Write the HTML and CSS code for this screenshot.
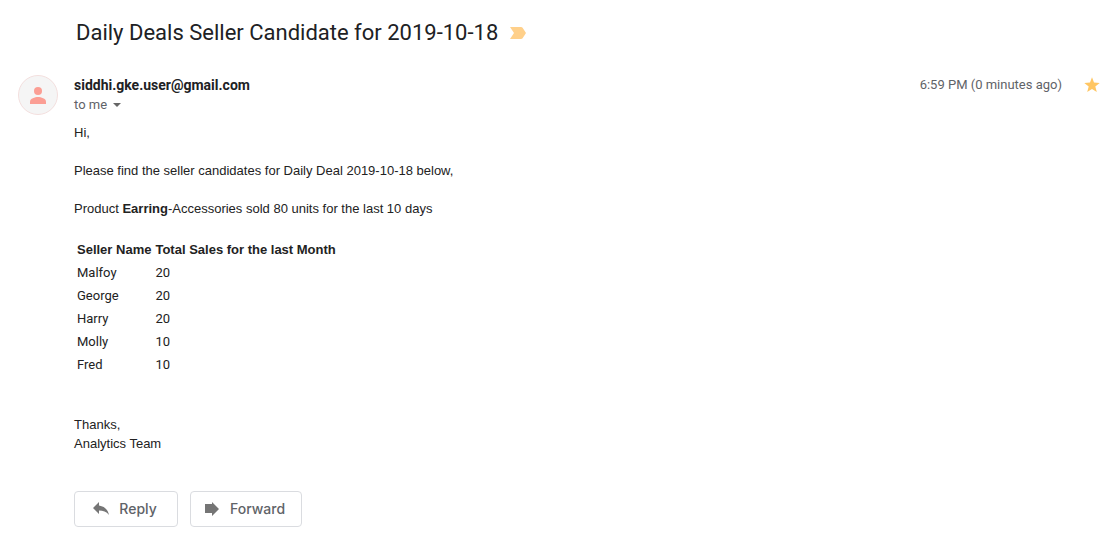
FILE: index.html
```html
<!DOCTYPE html>
<html lang="en">
<head>
<meta charset="utf-8">
<title>Daily Deals Seller Candidate for 2019-10-18</title>
<link rel="stylesheet" href="styles.css">
</head>
<body>
<main class="mail">
  <header class="subject">
    <h1 class="subject-text">Daily Deals Seller Candidate for 2019-10-18</h1>
    <button class="icon-button" type="button" aria-label="Important">
      <svg width="16" height="12" viewBox="0 0 16 12"><path fill="#ffd08a" d="M0 0h11q1 0 1.600.8L16 6l-3.400 5.200Q12 12 11 12H0l4-6z"/></svg>
    </button>
  </header>
  <article class="message">
    <svg class="avatar" viewBox="0 0 40 40" role="img" aria-label="Sender">
      <circle cx="20" cy="20" r="19.500" fill="#f5f5f5" stroke="#f3dfde"/>
      <circle cx="20" cy="16" r="4" fill="#fb9e94"/>
      <path fill="#fb9e94" d="M12 29v-2.500c0-3 5-4.500 8-4.500s8 1.500 8 4.500V29z"/>
    </svg>
    <div class="content">
      <div class="meta">
        <div class="sender">
          <strong class="address">siddhi.gke.user@gmail.com</strong>
          <button class="recipient" type="button">to me
            <svg width="8" height="4" viewBox="0 0 8 4"><path fill="#666" d="M0 0h8L4 4z"/></svg>
          </button>
        </div>
        <time class="time">6:59 PM (0 minutes ago)</time>
        <button class="icon-button" type="button" aria-label="Starred">
          <svg width="16" height="16" viewBox="0 0 16 16"><path fill="#ffc663" d="M8 .3l2 5.200 5.700.4-4.400 3.600 1.500 5.500L8 12l-4.800 3 1.500-5.500L.3 5.900 6 5.500z"/></svg>
        </button>
      </div>
      <div class="body">
        <p>Hi,</p>
        <p>Please find the seller candidates for Daily Deal 2019-10-18 below,</p>
        <p>Product <b>Earring</b>-Accessories sold 80 units for the last 10 days</p>
        <table class="sales">
          <thead><tr><th>Seller Name</th><th>Total Sales for the last Month</th></tr></thead>
          <tbody>
            <tr><td>Malfoy</td><td>20</td></tr>
            <tr><td>George</td><td>20</td></tr>
            <tr><td>Harry</td><td>20</td></tr>
            <tr><td>Molly</td><td>10</td></tr>
            <tr><td>Fred</td><td>10</td></tr>
          </tbody>
        </table>
        <p>Thanks,<br>Analytics Team</p>
      </div>
      <div class="actions">
        <button class="action" type="button">
          <svg width="16" height="14" viewBox="0 0 16 14"><path fill="#757575" d="M6 0v3.500C12 4.500 15 8 16 13c-2.500-3.500-6-4.500-10-4.500V12L0 6z"/></svg>
          Reply</button>
        <button class="action" type="button">
          <svg width="15" height="14" viewBox="0 0 15 14"><path fill="#757575" d="M0 2h7V0l7 7-7 7v-3H0z"/></svg>
          Forward</button>
      </div>
    </div>
  </article>
</main>
</body>
</html>
```
FILE: styles.css
```css
body {
  margin: 0;
  background: #fff;
  color: #222;
  font-family: "Liberation Sans", Arial, sans-serif;
  font-size: 13px;
  line-height: 19px;
}
button {
  border: 0;
  padding: 0;
  background: none;
  font: inherit;
  color: inherit;
  cursor: pointer;
}
.mail {
  padding: 18px 10px 12px 18px;
}
.subject {
  display: flex;
  align-items: center;
  gap: 12px;
  padding-left: 58px;
}
.subject-text {
  margin: 0;
  color: #202124;
  font: 400 22px/29px Roboto, sans-serif;
}
.icon-button {
  display: flex;
}
.message {
  display: flex;
  gap: 16px;
  margin-top: 28px;
}
.avatar {
  flex: none;
  width: 40px;
  height: 40px;
}
.content {
  flex: 1;
}
.meta {
  display: flex;
  align-items: flex-start;
  font-family: Roboto, sans-serif;
}
.sender {
  flex: 1;
}
.address {
  display: block;
  color: #202124;
  font-size: 14px;
  line-height: 20px;
}
.recipient {
  display: flex;
  align-items: center;
  gap: 6px;
  color: #5f6368;
  line-height: 20px;
}
.time {
  margin-right: 22px;
  color: #5f6368;
  line-height: 20px;
}
.meta .icon-button {
  margin-top: 2px;
}
.body {
  padding-top: 8px;
}
.body p {
  margin: 0 0 19px;
}
.sales {
  margin: 0 0 38px;
  border-collapse: separate;
  border-spacing: 2px;
}
.sales th,
.sales td {
  padding: 1px;
  text-align: left;
}
.sales td {
  font-family: Roboto, sans-serif;
}
.actions {
  display: flex;
  gap: 12px;
  margin-top: 38px;
}
.action {
  display: flex;
  align-items: center;
  justify-content: center;
  gap: 10px;
  min-width: 104px;
  height: 36px;
  padding: 0 16px 0 14px;
  border: 1px solid #dadce0;
  border-radius: 4px;
  color: #5f6368;
  font: 500 14px/20px Inter, sans-serif;
}
```
